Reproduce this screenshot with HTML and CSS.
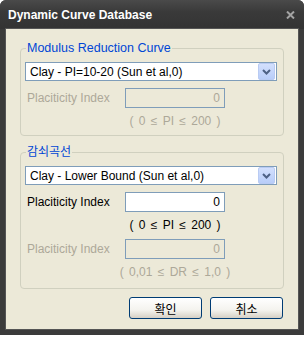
FILE: index.html
```html
<!DOCTYPE html>
<html lang="ko">
<head>
    <meta charset="UTF-8">
    <meta name="viewport" content="width=device-width, initial-scale=1.0">
    <title>Dynamic Curve Database</title>
    <link rel="stylesheet" href="styles.css">
</head>
<body>

<div class="window">
    <div class="titlebar">
        <span class="title">Dynamic Curve Database</span>
        <svg class="close" width="9" height="8" viewBox="0 0 9 8">
            <path d="M1 0.5 L8 7.5 M8 0.5 L1 7.5" stroke="#a3a3a3" stroke-width="2"/>
        </svg>
    </div>

    <div class="client">
        <fieldset class="group group-top">
            <legend>Modulus Reduction Curve</legend>

            <div class="combo">
                <span class="combo-text">Clay - PI=10-20 (Sun et al,0)</span>
                <span class="combo-btn">
                    <svg width="9" height="6" viewBox="0 0 9 6"><path d="M1 1 L4.5 4.5 L8 1" fill="none" stroke="#4d6185" stroke-width="2"/></svg>
                </span>
            </div>

            <div class="field disabled">
                <label>Placiticity Index</label>
                <input type="text" value="0" disabled>
            </div>
            <div class="range disabled"><span>( 0 ≤ PI ≤ 200 )</span></div>
        </fieldset>

        <fieldset class="group group-bottom">
            <legend>감쇠곡선</legend>

            <div class="combo">
                <span class="combo-text">Clay - Lower Bound (Sun et al,0)</span>
                <span class="combo-btn">
                    <svg width="9" height="6" viewBox="0 0 9 6"><path d="M1 1 L4.5 4.5 L8 1" fill="none" stroke="#4d6185" stroke-width="2"/></svg>
                </span>
            </div>

            <div class="field">
                <label>Placiticity Index</label>
                <input type="text" value="0">
            </div>
            <div class="range"><span>( 0 ≤ PI ≤ 200 )</span></div>

            <div class="field disabled">
                <label>Placiticity Index</label>
                <input type="text" value="0" disabled>
            </div>
            <div class="range disabled"><span>( 0,01 ≤ DR ≤ 1,0 )</span></div>
        </fieldset>

        <div class="buttons">
            <button class="btn">확인</button>
            <button class="btn">취소</button>
        </div>
    </div>
</div>

</body>
</html>
```

FILE: styles.css
```css
body { margin: 0; background: #fff; font-family: "Liberation Sans", Arial, "Noto Sans CJK KR", sans-serif; font-size: 12px; color: #000; }
.window { width: 304px; height: 335px; background: #3b3b3b; border-radius: 6px 6px 0 0; display: flex; flex-direction: column; }
.titlebar { height: 29px; padding: 0 9px 0 8px; display: flex; align-items: center; justify-content: space-between; background: linear-gradient(#4a4a4a, #3a3a3a 40%, #333); border-radius: 6px 6px 0 0; }
.title { color: #fff; font-weight: bold; font-size: 12px; margin-top: 1px; }
.close { margin-top: 1px; }
.client { flex: 1; margin: 0 6px 6px; background: #ece9d8; padding: 12px 14px 0; box-shadow: 0 0 0 1px #555; }
.group { margin: 0; padding: 0 6px 7px 4px; border: 1px solid #d0d0bf; border-radius: 4px; min-width: 0; }
.group-bottom { margin-top: 9px; padding-bottom: 9px; }
.group legend { color: #0046d5; padding: 0 1px; margin-left: 1px; font-size: 12.5px; line-height: 15px; }
.group-bottom legend { font-size: 12px; }
.combo { height: 19px; box-sizing: border-box; margin-top: 6px; border: 1px solid #7f9db9; background: #fff; display: flex; align-items: center; padding: 1px; }
.combo-text { flex: 1; padding-left: 3px; font-size: 12px; }
.combo-btn { width: 15px; height: 15px; border: 1px solid #b9cbf3; border-radius: 2px; background: linear-gradient(#d3e0fd, #b8cdf9); display: flex; align-items: center; justify-content: center; }
.field { display: flex; align-items: center; margin-top: 7px; padding-left: 2px; }
.field label { width: 98px; }
.field input { width: 100px; height: 20px; box-sizing: border-box; border: 1px solid #7f9db9; background: #fff; font: inherit; text-align: right; padding: 0 4px; margin: 0; color: #000; }
.disabled { color: #aca899; }
.field.disabled input { background: #ece9d8; color: #aca899; }
.range { margin: 6px 0 0 100px; width: 100px; height: 14px; display: flex; justify-content: center; white-space: nowrap; word-spacing: 2px; }
.buttons { display: flex; justify-content: flex-end; gap: 8px; margin-top: 8px; padding-right: 1px; }
.btn { width: 73px; height: 22px; border: 1px solid #003c74; border-radius: 3px; background: linear-gradient(#fff, #f4f3ee 60%, #d6d0c5); font-family: "Noto Sans CJK KR", sans-serif; font-size: 12px; padding: 0; color: #000; }
```
